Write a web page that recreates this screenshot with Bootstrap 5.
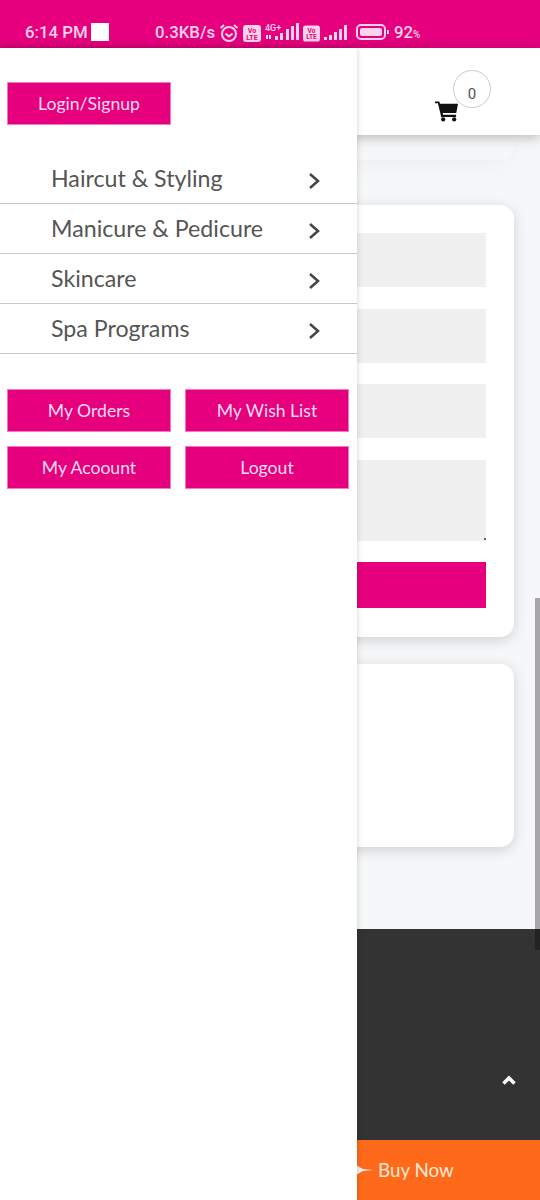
<!DOCTYPE html>
<html lang="en">
  <head>
    <meta charset="UTF-8" />
    <meta name="viewport" content="width=device-width, initial-scale=1.0" />
    <title>Menu</title>
    <link href="https://cdn.jsdelivr.net/npm/bootstrap@5.3.3/dist/css/bootstrap.min.css" rel="stylesheet" />
    <style>
      html, body { height: 1200px; overflow: hidden; }
      body { background: #f6f7f9; font-family: "Lato", sans-serif; position: relative; width: 540px; }
      .status-bar { height: 48px; background: #e6007e; color: #fbd3ea; font-family: Roboto, sans-serif; font-size: 16.800px; font-weight: 500; padding: 20px 0 0 25px; }
      .status-bar svg { display: block; flex: none; }
      .status-time { width: 62px; white-space: nowrap; }
      .status-square { width: 18px; height: 18px; background: #fff; margin: 3px 0 0 4px; }
      .net-speed { width: 60px; margin-left: 46px; white-space: nowrap; }
      .ic-alarm { margin: 3px 0 0 4px; }
      .ic-volte { margin: 5px 0 0 4px; }
      .ic-sig-a { margin: 3px 0 0 2px; }
      .ic-sig-b { margin: 5px 0 0 4px; }
      .ic-batt { margin: 4px 0 0 7px; }
      .batt-pct { margin-left: 4px; }
      .batt-pct i { font-style: normal; font-size: 10px; }
      .top-header { height: 87px; background: #fff; box-shadow: 0 2px 12px rgba(0, 0, 0, .28); position: relative; z-index: 2; }
      .cart-wrap { position: absolute; left: 435px; top: 53px; }
      .cart-count { position: absolute; left: 453px; top: 22px; width: 38px; height: 38px; border: 1px solid #ccc; border-radius: 50%; color: #555; font-family: Roboto, sans-serif; font-size: 15px; display: flex; justify-content: center; padding-top: 11px; line-height: 24px; }
      .page-body { padding-right: 26px; }
      .prev-card { height: 25px; border-radius: 0 0 14px 0; box-shadow: 0 6px 20px rgba(0, 0, 0, .03); }
      .form-box { height: 432px; margin-top: 45px; background: #fff; border-radius: 0 14px 14px 0; box-shadow: 0 3px 14px rgba(0, 0, 0, .16); padding: 28px 28px 0 0; }
      .fake-input { background: #f0f0f0; height: 54px; margin-bottom: 21.500px; position: relative; }
      .fake-area { height: 81px; margin-bottom: 21.500px; }
      .fake-area::after { content: ""; position: absolute; right: 0; bottom: 1px; width: 2px; height: 2px; background: #666; }
      .send-btn { background: #e6007e; height: 46px; }
      .info-box { height: 183px; margin-top: 27px; background: #fff; border-radius: 0 14px 14px 0; box-shadow: 0 3px 14px rgba(0, 0, 0, .16); }
      .site-footer { position: absolute; left: 0; right: 0; top: 929px; height: 211px; background: #333; }
      .up-arrow { position: absolute; left: 502px; top: 146px; }
      .buy-bar { position: absolute; left: 0; right: 0; top: 1140px; height: 60px; background: #ff6a1a; color: #ffe9d6; font-size: 18.800px; padding-left: 378px; line-height: 60px; }
      .buy-tip { position: absolute; left: 356px; top: 24px; }
      .page-scroll { position: absolute; right: 0; top: 598px; width: 5px; height: 352px; background: rgba(0, 0, 0, .32); }
      .side-drawer { position: absolute; left: 0; top: 48px; bottom: 0; width: 357px; background: #fff; box-shadow: 0 0 6px rgba(0, 0, 0, .18); z-index: 5; }
      .pink-btn { background: #e6007e; color: #fbdcef; border: 1px solid #f07cbf; border-radius: 0; width: 164px; height: 43px; font-size: 17.600px; padding: 1px 0 0; box-shadow: none; }
      .login-row { padding: 34px 0 0 7px; }
      .drawer-menu { margin-top: 29px; }
      .drawer-menu .list-group-item { height: 50px; padding: 0 37px 0 51px; border: 0; border-bottom: 1px solid #c9c9c9; border-radius: 0; color: #555; font-size: 23.200px; background: none; }
      .drawer-menu svg { margin-top: 4px; }
      .drawer-btns { padding: 35px 0 0 7px; column-gap: 14px; row-gap: 14px; width: 350px; }
    </style>
  </head>
  <body>
    <div class="status-bar d-flex align-items-start">
      <span class="status-time">6:14 PM</span>
      <span class="status-square"></span>
      <span class="net-speed">0.3KB/s</span>
      <svg class="ic-alarm" width="20" height="20" viewBox="0 0 20 20" fill="none" stroke="#fbd3ea" stroke-width="2"><circle cx="10" cy="11" r="7" /><path d="M6.500 10.500l3.500 3 3.500-3" /><path d="M1.500 5L5 2M18.500 5L15 2" /></svg>
      <svg class="ic-volte" width="18" height="17" viewBox="0 0 18 17"><rect width="18" height="17" rx="3" fill="#fbd3ea" /><text x="9" y="7.500" text-anchor="middle" font-family="Roboto, sans-serif" font-size="7" font-weight="700" fill="#e6007e">Vo</text><text x="9" y="14.500" text-anchor="middle" font-family="Roboto, sans-serif" font-size="7" font-weight="700" fill="#e6007e">LTE</text></svg>
      <svg class="ic-sig-a" width="36" height="20" viewBox="0 0 36 20" fill="#fbd3ea"><text x="2" y="8" font-family="Roboto, sans-serif" font-size="9">4G+</text><rect x="3" y="12" width="2" height="4" /><rect x="6" y="12" width="2" height="4" /><rect x="12" y="13" width="3" height="4" /><rect x="17" y="10" width="3" height="7" /><rect x="23" y="6" width="3" height="11" /><rect x="28" y="3" width="3" height="14" /><rect x="33" y="0" width="3" height="17" /></svg>
      <svg class="ic-volte" width="17" height="17" viewBox="0 0 18 17"><rect width="18" height="17" rx="3" fill="#fbd3ea" /><text x="9" y="7.500" text-anchor="middle" font-family="Roboto, sans-serif" font-size="7" font-weight="700" fill="#e6007e">Vo</text><text x="9" y="14.500" text-anchor="middle" font-family="Roboto, sans-serif" font-size="7" font-weight="700" fill="#e6007e">LTE</text></svg>
      <svg class="ic-sig-b" width="25" height="16" viewBox="0 0 25 16" fill="#fbd3ea"><rect x="0" y="12" width="3" height="3" /><rect x="5" y="10" width="3" height="5" /><rect x="10" y="7" width="3" height="8" /><rect x="15" y="4" width="3" height="11" /><rect x="20" y="0" width="3" height="15" /></svg>
      <svg class="ic-batt" width="34" height="16" viewBox="0 0 34 16"><rect x="1" y="1" width="28" height="14" rx="4" fill="none" stroke="#fbd3ea" stroke-width="2" /><rect x="4" y="4" width="22" height="8" rx="2" fill="#fbd3ea" /><rect x="31" y="6" width="2" height="4" fill="#fbd3ea" /></svg>
      <span class="batt-pct">92<i>%</i></span>
    </div>

    <header class="top-header">
      <div class="cart-count">0</div>
      <svg class="cart-wrap" width="23" height="21" viewBox="0 0 24 21" fill="#111"><path d="M0 0h4.500l.7 2.500H24l-1.800 9.500H8l.4 2H22v2.200H6.500L3 2H0z" /><circle cx="8.500" cy="18.800" r="2.200" /><circle cx="20" cy="18.800" r="2.200" /></svg>
    </header>

    <main class="page-body">
      <div class="prev-card"></div>
      <div class="form-box">
        <div class="fake-input"></div>
        <div class="fake-input"></div>
        <div class="fake-input"></div>
        <div class="fake-input fake-area"></div>
        <div class="send-btn"></div>
      </div>
      <div class="info-box"></div>
    </main>

    <footer class="site-footer">
      <svg class="up-arrow" width="14" height="10" viewBox="0 0 14 10" fill="none" stroke="#fff" stroke-width="3.500"><path d="M1.500 8.500L7 3l5.500 5.500" /></svg>
    </footer>
    <div class="buy-bar">
      <svg class="buy-tip" width="18" height="12" viewBox="0 0 18 12" fill="#f3efe9"><path d="M0 1l7 4 10 1-10 1-7 4z" /></svg>
      Buy Now
    </div>
    <div class="page-scroll"></div>

    <aside class="side-drawer">
      <div class="login-row">
        <button class="btn pink-btn" type="button">Login/Signup</button>
      </div>
      <ul class="list-group drawer-menu">
        <li class="list-group-item d-flex justify-content-between align-items-center">Haircut &amp; Styling
          <svg width="12" height="18" viewBox="0 0 12 18" fill="none" stroke="#444" stroke-width="2.500"><path d="M2 2l8 7-8 7" /></svg></li>
        <li class="list-group-item d-flex justify-content-between align-items-center">Manicure &amp; Pedicure
          <svg width="12" height="18" viewBox="0 0 12 18" fill="none" stroke="#444" stroke-width="2.500"><path d="M2 2l8 7-8 7" /></svg></li>
        <li class="list-group-item d-flex justify-content-between align-items-center">Skincare
          <svg width="12" height="18" viewBox="0 0 12 18" fill="none" stroke="#444" stroke-width="2.500"><path d="M2 2l8 7-8 7" /></svg></li>
        <li class="list-group-item d-flex justify-content-between align-items-center">Spa Programs
          <svg width="12" height="18" viewBox="0 0 12 18" fill="none" stroke="#444" stroke-width="2.500"><path d="M2 2l8 7-8 7" /></svg></li>
      </ul>
      <div class="drawer-btns d-flex flex-wrap">
        <button class="btn pink-btn" type="button">My Orders</button>
        <button class="btn pink-btn" type="button">My Wish List</button>
        <button class="btn pink-btn" type="button">My Acoount</button>
        <button class="btn pink-btn" type="button">Logout</button>
      </div>
    </aside>

    <script src="https://cdn.jsdelivr.net/npm/bootstrap@5.3.3/dist/js/bootstrap.bundle.min.js"></script>
  </body>
</html>
